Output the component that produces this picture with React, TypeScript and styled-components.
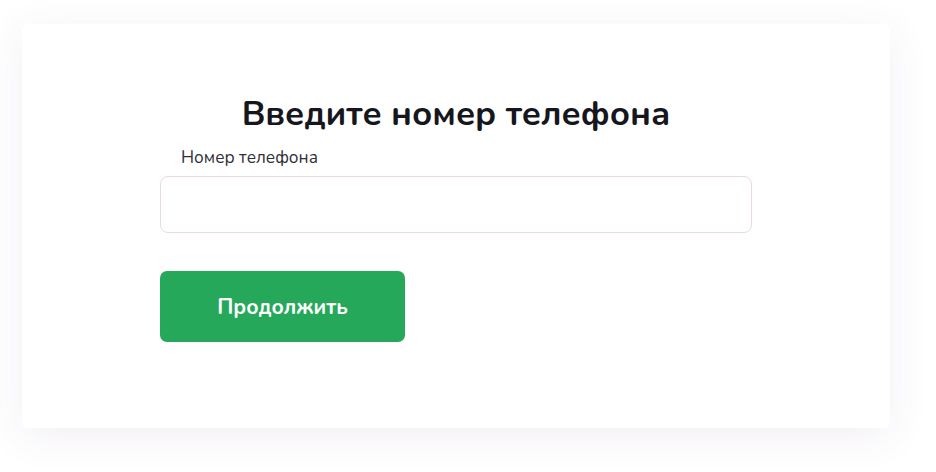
import React from 'react';
import styled, { createGlobalStyle } from 'styled-components';

const GlobalStyle = createGlobalStyle`
  html, body {
    margin: 0;
    padding: 0;
    background: #ffffff;
  }

  body {
    font-family: Nunito, 'Noto Sans', 'Open Sans', sans-serif;
    color: #16161d;
  }

  * {
    box-sizing: border-box;
  }
`;

const Page = styled.main`
  width: 936px;
  height: 472px;
  padding: 24px 46px 0 22px;
`;

const Card = styled.section`
  width: 868px;
  height: 404px;
  padding: 68px 138px 0;
  background: #ffffff;
  border-radius: 6px;
  box-shadow: 0 8px 40px rgba(110, 70, 130, 0.09);
  display: flex;
  flex-direction: column;
`;

const Title = styled.h1`
  margin: 0 0 10px;
  font-size: 34.5px;
  line-height: 44px;
  font-weight: 700;
  text-align: center;
  color: #16161d;
`;

const Label = styled.label`
  display: block;
  margin: 0 0 6px 21px;
  font-size: 17.2px;
  line-height: 24px;
  color: #2f2f36;
`;

const Input = styled.input`
  width: 100%;
  height: 57px;
  padding: 0 20px;
  border: 1px solid #ead9e6;
  border-radius: 8px;
  background: #ffffff;
  font: inherit;
  font-size: 16px;
  outline: none;
`;

const Button = styled.button<{ width?: number }>`
  margin-top: 38px;
  width: ${({ width = 245 }) => width}px;
  height: 71px;
  border: none;
  border-radius: 7px;
  background: #25a85a;
  color: #ffffff;
  font: inherit;
  font-size: 21px;
  font-weight: 700;
  cursor: pointer;
`;

export default function App() {
  return (
    <Page>
      <GlobalStyle />
      <Card>
        <Title>Введите номер телефона</Title>
        <Label htmlFor="phone">Номер телефона</Label>
        <Input id="phone" type="tel" />
        <Button type="button">Продолжить</Button>
      </Card>
    </Page>
  );
}
